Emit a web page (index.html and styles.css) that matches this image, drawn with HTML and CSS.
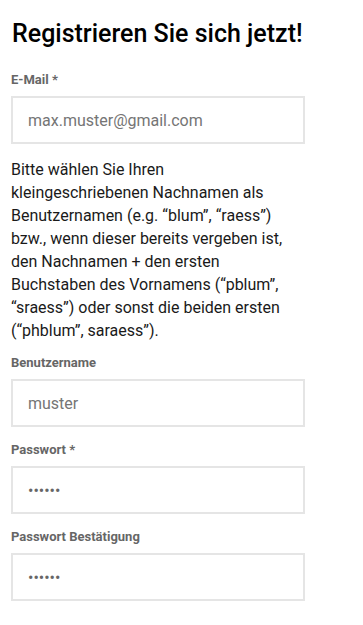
FILE: index.html
```html
<!DOCTYPE html>
<html lang="de">
<head>
<meta charset="utf-8">
<title>Registrieren</title>
<link rel="stylesheet" href="styles.css">
</head>
<body>
<main class="form-wrap">
  <h1 class="title">Registrieren Sie sich jetzt!</h1>
  <form class="form">
    <div class="field">
      <label class="label" for="email">E-Mail *</label>
      <input class="input" id="email" type="email" placeholder="max.muster@gmail.com">
    </div>
    <p class="hint">Bitte wählen Sie Ihren kleingeschriebenen Nachnamen als Benutzernamen (e.g. “blum”, “raess”) bzw., wenn dieser bereits vergeben ist, den Nachnamen + den ersten Buchstaben des Vornamens (“pblum”, “sraess”) oder sonst die beiden ersten (“phblum”, saraess”).</p>
    <div class="field">
      <label class="label" for="user">Benutzername</label>
      <input class="input" id="user" type="text" placeholder="muster">
    </div>
    <div class="field">
      <label class="label" for="pw">Passwort *</label>
      <input class="input" id="pw" type="password" value="123456">
    </div>
    <div class="field">
      <label class="label" for="pw2">Passwort Bestätigung</label>
      <input class="input" id="pw2" type="password" value="123456">
    </div>
  </form>
</main>
</body>
</html>
```

FILE: styles.css
```css
html, body {
  margin: 0;
  padding: 0;
  background: #ffffff;
}

body {
  font-family: Roboto, "Liberation Sans", Arial, sans-serif;
  color: #1a1a1a;
}

.form-wrap {
  width: 294px;
  padding: 19px 11px 0 11px;
}

.title {
  margin: 0;
  font-size: 25px;
  line-height: 29px;
  font-weight: 500;
  color: #000;
  padding-left: 1px;
  white-space: nowrap;
}

.form {
  display: flex;
  flex-direction: column;
  margin-top: 23px;
}

.field {
  display: flex;
  flex-direction: column;
}

.field + .field {
  margin-top: 14px;
}

.label {
  font-size: 13px;
  line-height: 18px;
  font-weight: 700;
  color: #666;
  margin-bottom: 7px;
}

.input {
  box-sizing: border-box;
  width: 294px;
  height: 48px;
  margin: 0;
  border: 2px solid #e5e5e5;
  border-radius: 0;
  padding: 0 15px;
  font-family: Roboto, "Liberation Sans", Arial, sans-serif;
  font-size: 16px;
  color: #666;
  background: #fff;
  outline: none;
}

.input::placeholder {
  color: #757575;
  opacity: 1;
}

.hint {
  margin: 14px 0 12px 0;
  font-size: 16px;
  line-height: 23px;
  color: #1a1a1a;
}
```
